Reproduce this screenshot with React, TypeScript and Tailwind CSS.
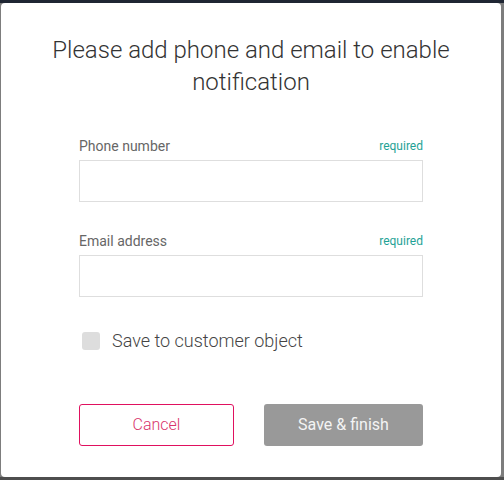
import React from "react";

function Field({ label }: { label: string }) {
  return (
    <div className="flex flex-col">
      <div className="flex items-end justify-between">
        <span className="text-[14px] leading-[20px] text-[#666]">{label}</span>
        <span className="text-[12px] leading-[20px] text-[#1fa296]">required</span>
      </div>
      <input type="text" className="mt-[4px] h-[42px] w-full border border-[#dedede] bg-white px-3 text-[14px] outline-none" />
    </div>
  );
}

export default function App() {
  return (
    <div
      className="h-[480px] w-[504px] overflow-hidden border-t-[3px] border-b-[3px] border-t-[#1f2633] border-b-[#4e4e4e] bg-[#7d7d7d] px-[1px]"
      style={{ fontFamily: "Roboto, 'Liberation Sans', sans-serif" }}
    >
      <div className="flex h-[474px] w-[500px] flex-col rounded-[4px] bg-white px-[30px] pt-[31px]">
        <h1 className="text-center text-[24px] font-light leading-[32px] text-[#333]">
          Please add phone and email to enable notification
        </h1>
        <div className="mt-[38px] flex flex-col px-[48px]">
          <Field label="Phone number" />
          <div className="mt-[29px]">
            <Field label="Email address" />
          </div>
          <label className="mt-[32px] flex items-center gap-[12px] pl-[3px]">
            <span className="h-[18px] w-[18px] rounded-[3px] bg-[#dddddd]" />
            <span className="text-[18px] font-light leading-[24px] text-[#444]">Save to customer object</span>
          </label>
          <div className="mt-[51px] flex justify-between">
            <button className="h-[42px] w-[155px] rounded-[3px] border border-[#e0115f] bg-white text-[16px] font-light text-[#d9336b]">
              Cancel
            </button>
            <button className="h-[42px] w-[159px] rounded-[3px] bg-[#999999] text-[16px] text-[#f4f4f4]">
              Save &amp; finish
            </button>
          </div>
        </div>
      </div>
    </div>
  );
}
